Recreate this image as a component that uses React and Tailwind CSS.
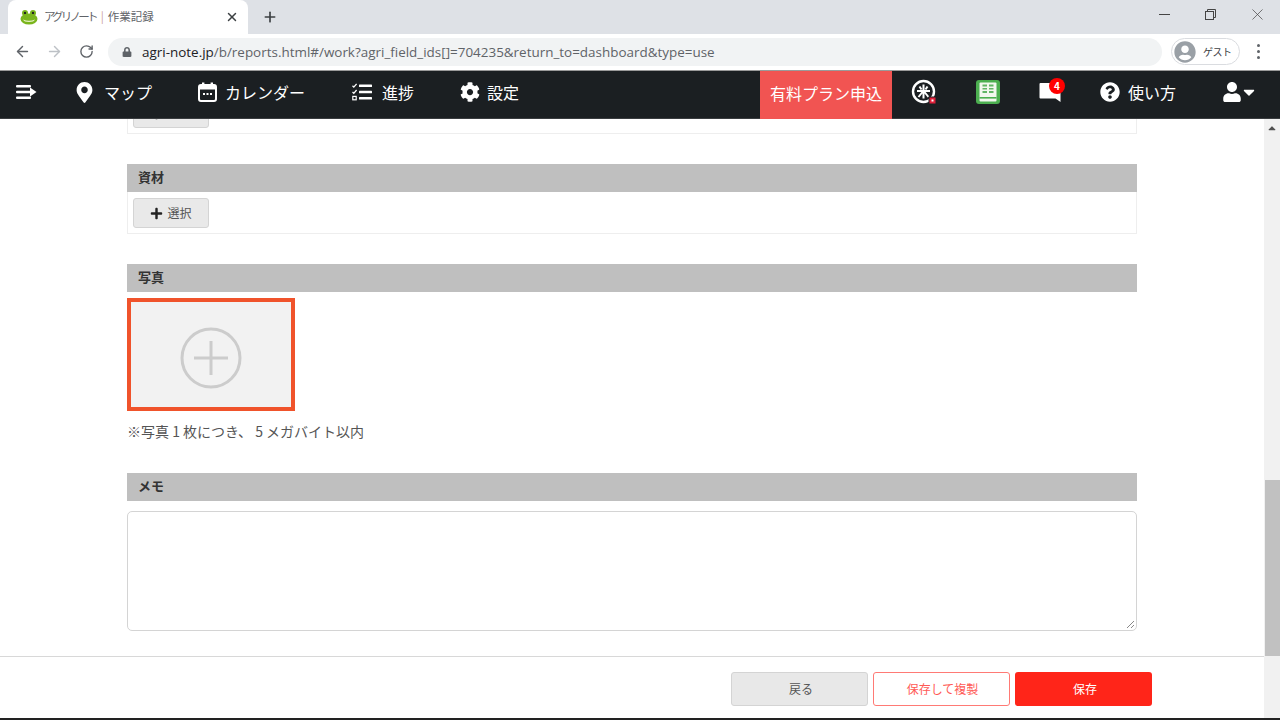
import React from 'react';
import { ArrowLeft, ArrowRight, RotateCw, X, Plus } from 'lucide-react';
import { FaMapMarkerAlt, FaCog, FaQuestionCircle, FaUser, FaCaretDown, FaLock, FaUserCircle, FaPlus, FaCaretUp } from 'react-icons/fa';

const font = 'font-["Noto_Sans_CJK_JP","Noto_Sans",sans-serif]';

function Frog() {
  return (
    <svg width="18" height="16" viewBox="0 0 18 16">
      <circle cx="5" cy="4" r="3" fill="#7ab51d" />
      <circle cx="13" cy="4" r="3" fill="#7ab51d" />
      <circle cx="5" cy="4" r="1.2" fill="#222" />
      <circle cx="13" cy="4" r="1.2" fill="#222" />
      <ellipse cx="9" cy="10" rx="8.5" ry="5.5" fill="#7ab51d" />
      <path d="M3 10.5q6 2.5 12 0q-1 2.5-6 2.5t-6-2.5z" fill="#e8f2c8" />
    </svg>
  );
}

function MenuArrow() {
  return (
    <svg width="21" height="14" viewBox="0 0 21 14" fill="#fff">
      <rect x="0" y="0" width="15" height="2.4" rx="1" />
      <rect x="0" y="5.8" width="15" height="2.4" rx="1" />
      <rect x="0" y="11.6" width="15" height="2.4" rx="1" />
      <path d="M14 2.6l6.5 4.4L14 11.4z" />
    </svg>
  );
}

function CalendarIcon() {
  return (
    <svg width="19" height="20" viewBox="0 0 19 20" fill="none">
      <rect x="1" y="3" width="17" height="16" rx="2" stroke="#fff" strokeWidth="2" />
      <rect x="1" y="3" width="17" height="4.5" fill="#fff" />
      <rect x="4" y="0.5" width="2.4" height="4" fill="#fff" />
      <rect x="12.6" y="0.5" width="2.4" height="4" fill="#fff" />
      <rect x="5" y="11" width="2" height="2" fill="#fff" />
      <rect x="8.5" y="11" width="2" height="2" fill="#fff" />
      <rect x="12" y="11" width="2" height="2" fill="#fff" />
    </svg>
  );
}

function ChecklistIcon() {
  return (
    <svg width="20" height="18" viewBox="0 0 20 18" fill="#fff">
      <rect x="7" y="1.5" width="13" height="2.6" rx="0.6" />
      <rect x="7" y="7.7" width="13" height="2.6" rx="0.6" />
      <rect x="7" y="13.9" width="13" height="2.6" rx="0.6" />
      <path d="M0.5 2.8l1.3 1.3L4.6 0.8" stroke="#fff" strokeWidth="1.3" fill="none" />
      <path d="M0.5 9l1.3 1.3L4.6 7" stroke="#fff" strokeWidth="1.3" fill="none" />
      <rect x="0.8" y="13.4" width="3.4" height="3.4" fill="none" stroke="#fff" strokeWidth="1.2" />
    </svg>
  );
}

function RiceIcon() {
  return (
    <svg width="26" height="26" viewBox="0 0 26 26" fill="none">
      <circle cx="12.5" cy="12.5" r="10.5" stroke="#fff" strokeWidth="2.4" />
      <path d="M12.5 5.5v14M6 12h13M8.5 7.5l2 3M16.5 7.5l-2 3M7.5 18l4-5M17.5 18l-4-5" stroke="#fff" strokeWidth="2" />
      <rect x="18" y="18" width="7" height="7" fill="#e0203a" stroke="#1b1f22" strokeWidth="1" />
      <rect x="20.5" y="20.5" width="2" height="2" fill="#fff" />
    </svg>
  );
}

function BookIcon() {
  return (
    <svg width="24" height="24" viewBox="0 0 24 24">
      <rect x="0" y="0" width="24" height="24" rx="3" fill="#4caf50" />
      <rect x="3.5" y="2.5" width="17" height="19" rx="1" fill="#f2f7ef" />
      <path d="M6.5 4.5h4.5v2H6.5zM13 4.5h4.5v2H13zM6.5 8h4.5v1.5H6.5zM13 8h4.5v1.5H13zM6.5 11h4.5v2H6.5zM13 11h4.5v2H13z" fill="#62b566" />
      <rect x="3.5" y="17" width="17" height="1.6" fill="#4caf50" />
    </svg>
  );
}

function ChatIcon() {
  return (
    <svg width="22" height="21" viewBox="0 0 22 21" fill="#fff">
      <path d="M1.5 1h19a1 1 0 0 1 1 1v13v5l-5-3.5H1.5a1 1 0 0 1-1-1V2a1 1 0 0 1 1-1z" />
    </svg>
  );
}

function SectionHeader({ children }) {
  return <div className="h-7 bg-[#bfbfbf] pl-[11px] text-[13px] leading-[25px] font-bold text-[#333]">{children}</div>;
}

function SelectButton({ className = '' }) {
  return (
    <div className={`flex h-[30px] w-[76px] items-center justify-center gap-[4px] rounded-[3px] border border-[#d4d4d4] bg-[#e9e9e9] text-[12px] text-[#555] ${className}`}>
      <FaPlus className="text-[13px] text-[#222]" />
      <span>選択</span>
    </div>
  );
}

export default function App() {
  return (
    <div className={`flex h-[720px] w-[1280px] flex-col overflow-hidden bg-white ${font}`}>
      {/* tab strip */}
      <div className="flex h-[34px] shrink-0 items-center bg-[#dee1e6] pl-2">
        <div className="flex h-[34px] w-[240px] items-center rounded-t-lg bg-white pl-3 pr-[9px]">
          <Frog />
          <span className="ml-[6px] flex-1 text-[11.5px] whitespace-nowrap text-[#5f6368]">
            <span className="tracking-[-2.8px]">アグリノート</span>
            <span className="ml-[5px] text-[#c9a0a0]">|</span>
            <span className="ml-[4px]">作業記録</span>
          </span>
          <X size={14} strokeWidth={2.5} className="text-[#3c4043]" />
        </div>
        <Plus size={16} strokeWidth={2.5} className="ml-[14px] text-[#3c4043]" />
        <div className="ml-auto -mt-[6px] flex items-center pr-[13px]">
          <div className="h-px w-[11px] bg-[#444]" />
          <svg width="11" height="11" viewBox="0 0 11 11" fill="none" stroke="#444" className="ml-[35px]">
            <rect x="0.5" y="2.5" width="8" height="8" />
            <path d="M2.5 2.5v-2h8v8h-2" />
          </svg>
          <X size={19} strokeWidth={0.9} className="ml-[32px] text-[#444]" />
        </div>
      </div>

      {/* address bar */}
      <div className="flex h-[37px] shrink-0 items-center border-b border-[#9a9a9a] bg-white pb-[1px]">
        <ArrowLeft size={17} strokeWidth={2} className="ml-[14px] text-[#5f6368]" />
        <ArrowRight size={17} strokeWidth={2} className="ml-[15px] text-[#bdc1c6]" />
        <RotateCw size={15} strokeWidth={2.2} className="ml-[16px] text-[#5f6368]" />
        <div className="ml-[14px] flex h-7 w-[1054px] items-center rounded-full bg-[#f1f3f4] pl-[14px] font-['Open_Sans'] text-[13.45px] text-[#5f6368]">
          <FaLock className="text-[10px] text-[#5f6368]" />
          <span className="ml-[10px] pt-[1px] whitespace-nowrap"><span className="text-[#202124]">agri-note.jp</span>/b/reports.html#/work?agri_field_ids[]=704235&amp;return_to=dashboard&amp;type=use</span>
        </div>
        <div className="ml-[9px] flex h-[27px] w-[69px] items-center rounded-full border border-[#dadce0] pl-[2px]">
          <FaUserCircle className="text-[22px] text-[#9aa0a6]" />
          <span className="ml-[7px] text-[10px] tracking-[-0.5px] text-[#3c4043]">ゲスト</span>
        </div>
        <div className="ml-[17px] flex flex-col gap-[3px]">
          <div className="h-[3px] w-[3px] rounded-full bg-[#5f6368]" />
          <div className="h-[3px] w-[3px] rounded-full bg-[#5f6368]" />
          <div className="h-[3px] w-[3px] rounded-full bg-[#5f6368]" />
        </div>
      </div>

      {/* app nav */}
      <div className="flex h-12 shrink-0 items-center border-b border-[#3a3d40] bg-[#1b1f22] pb-[5px] text-[16px] text-white">
        <div className="ml-4"><MenuArrow /></div>
        <FaMapMarkerAlt className="ml-[36.5px] text-[21px]" />
        <span className="ml-[9.5px] w-[47px] whitespace-nowrap">マップ</span>
        <div className="ml-[47px]"><CalendarIcon /></div>
        <span className="ml-2 w-[79px] whitespace-nowrap">カレンダー</span>
        <div className="ml-12"><ChecklistIcon /></div>
        <span className="ml-[10px] w-8 whitespace-nowrap">進捗</span>
        <FaCog className="ml-[46px] text-[20px]" />
        <span className="ml-[7px] w-8 whitespace-nowrap">設定</span>
        <div className="ml-[241px] flex h-12 w-[132px] items-center justify-center self-start bg-[#f15452] pb-[4px] text-[16px] whitespace-nowrap">有料プラン申込</div>
        <div className="ml-[19px]"><RiceIcon /></div>
        <div className="ml-[39px]"><BookIcon /></div>
        <div className="relative ml-[39px]">
          <ChatIcon />
          <div className="absolute -top-[4px] left-[10px] flex h-4 w-4 items-center justify-center rounded-full bg-[#f00] text-[10px] font-bold">4</div>
        </div>
        <FaQuestionCircle className="ml-[39px] text-[20px]" />
        <span className="ml-2 w-12 whitespace-nowrap">使い方</span>
        <FaUser className="ml-[46px] text-[20px]" />
        <FaCaretDown className="-ml-[2.5px] text-[18px]" />
      </div>

      {/* page body + scrollbar */}
      <div className="relative flex min-h-0 flex-1">
        <div className="flex min-w-0 flex-1 flex-col">
          <div className="min-h-0 flex-1 overflow-hidden pl-[127px] pr-[127px]">
            <div className="h-[15px] overflow-hidden border-x border-b border-[#eeeeee] pl-[5px]">
              <SelectButton className="-mt-[21px]" />
            </div>

            <div className="mt-[30px]">
              <SectionHeader>資材</SectionHeader>
              <div className="h-[42px] border-x border-b border-[#eeeeee] pl-[5px] pt-[6px]">
                <SelectButton />
              </div>
            </div>

            <div className="mt-[30px]">
              <SectionHeader>写真</SectionHeader>
              <div className="mt-[6px] flex h-[113px] w-[168px] items-center justify-center border-4 border-[#f0532b] bg-[#f2f2f2] pt-[6px]">
                <svg width="62" height="62" viewBox="0 0 62 62" fill="none" stroke="#cccccc" strokeWidth="3">
                  <circle cx="31" cy="31" r="29" />
                  <path d="M31 14v34M14 31h34" />
                </svg>
              </div>
              <p className="mt-[9px] text-[14px] leading-[22px] text-[#555]">※写真 1 枚につき、 5 メガバイト以内</p>
            </div>

            <div className="mt-[31px]">
              <SectionHeader>メモ</SectionHeader>
              <div className="relative mt-[10px] h-[120px] rounded-[5px] border border-[#d4d4d4]">
                <svg width="9" height="9" viewBox="0 0 9 9" stroke="#888" className="absolute bottom-[1px] right-[1px]">
                  <path d="M1 8l7-7M5 8l3-3" />
                </svg>
              </div>
            </div>
          </div>
        </div>

        {/* scrollbar */}
        <div className="flex w-4 shrink-0 flex-col items-center bg-[#f1f1f1]">
          <FaCaretUp className="mt-[3px] text-[12px] text-[#505050]" />
          <div className="flex-1" />
          <div className="mb-[64px] h-[176px] w-[15px] bg-[#c1c1c1]" />
        </div>

        {/* footer sits over the page */}
        <div className="absolute bottom-0 left-0 right-[16px] flex h-[64px] items-start justify-end border-t border-[#d8d8d8] bg-white pr-[112px] pt-[15px] text-[12px]">
          <div className="flex h-[34px] w-[137px] items-center justify-center rounded-[3px] border border-[#d4d4d4] bg-[#e8e8e8] pl-[3px] text-[#555]">戻る</div>
          <div className="ml-[5px] flex h-[34px] w-[137px] items-center justify-center rounded-[3px] border border-[#ff7a75] bg-white pl-[2px] text-[#ff5a55]">保存して複製</div>
          <div className="ml-[5px] flex h-[34px] w-[137px] items-center justify-center rounded-[3px] bg-[#ff2519] pl-[3px] text-white">保存</div>
        </div>
        <div className="absolute bottom-0 left-0 right-0 h-[2px] bg-[#222]" />
      </div>
    </div>
  );
}
